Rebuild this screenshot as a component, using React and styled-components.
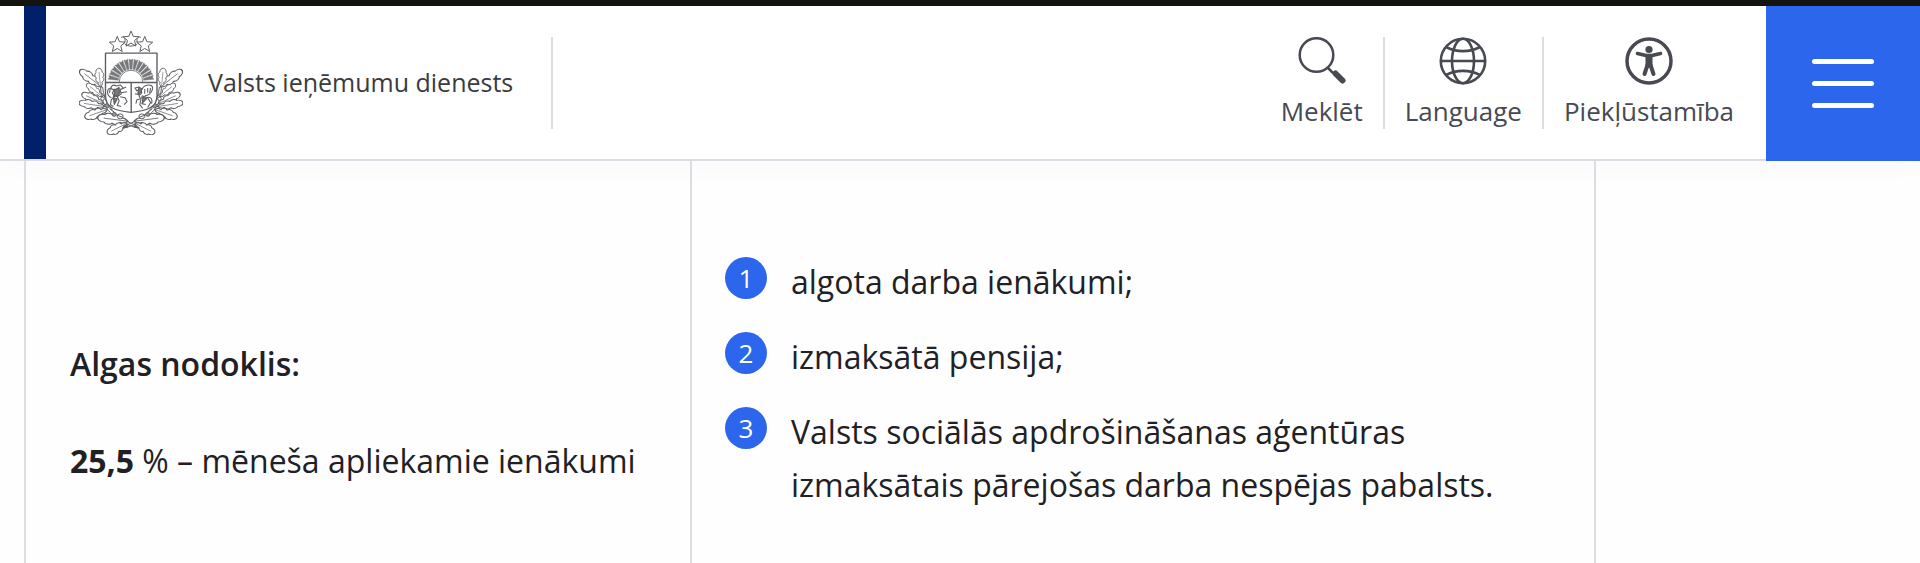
import React from "react"
import styled, { createGlobalStyle } from "styled-components"

const colors = {
  ink: "#1f2125",
  label: "#484a51",
  line: "#dcdde3",
  blue: "#2b66ec",
  navy: "#00206a",
}

const GlobalStyle = createGlobalStyle`
  * {
    box-sizing: border-box;
  }
  body {
    margin: 0;
    background: #fefefe;
    color: ${colors.ink};
    font-family: "Open Sans", "Noto Sans", sans-serif;
  }
`

const Header = styled.header`
  display: flex;
  align-items: stretch;
  height: 161px;
  border-top: 6px solid #14140f;
  background: #fff;
  box-shadow: 0 8px 24px rgba(20, 20, 40, 0.02);
`

const HeaderMain = styled.div`
  display: flex;
  flex: 1;
  align-items: center;
  justify-content: space-between;
  padding: 0 12px 0 24px;
  border-bottom: 2px solid ${colors.line};
`

const Brand = styled.a`
  display: flex;
  align-self: stretch;
  align-items: center;
  padding-left: 33px;
  border-left: 22px solid ${colors.navy};
  color: #3a3b3e;
  font-size: 25px;
  line-height: 32px;
  text-decoration: none;
`

const BrandName = styled.span`
  margin: 0 38px 0 25px;
  padding-bottom: 2px;
`

const Divider = styled.span`
  width: 2px;
  height: 92px;
  background: ${colors.line};
`

const Tools = styled.nav`
  display: flex;
  align-items: center;
`

const ToolButton = styled.button`
  display: flex;
  flex-direction: column;
  align-items: center;
  gap: 10px;
  padding: 0 20px 2px;
  border: 0;
  background: none;
  color: ${colors.label};
  font: inherit;
  font-size: 26px;
  line-height: 32px;
  cursor: pointer;
`

const MenuButton = styled.button`
  display: flex;
  flex-direction: column;
  align-items: center;
  justify-content: center;
  gap: 17px;
  width: 154px;
  padding: 0;
  border: 0;
  background: ${colors.blue};
  cursor: pointer;
`

const MenuLine = styled.span`
  width: 62px;
  height: 5px;
  border-radius: 3px;
  background: #fff;
`

const TaxTable = styled.table`
  width: calc(100% - 48px);
  max-width: 1572px;
  margin-left: 24px;
  border-spacing: 0;
  font-size: 32px;
  line-height: 53px;
`

const Cell = styled.td`
  padding: ${props => (props.$list ? "94px 33px 52px" : "176px 32px 52px 44px")};
  width: ${props => (props.$list ? "auto" : "668px")};
  border-left: ${props => (props.$list ? "0" : `2px solid ${colors.line}`)};
  border-right: 2px solid ${colors.line};
  vertical-align: top;
`

const Paragraph = styled.p`
  margin: 0 0 44px;

  &:last-child {
    margin-bottom: 0;
  }
`

const Strong = styled.strong`
  font-weight: ${props => (props.$heavy ? 700 : 600)};
`

const IncomeList = styled.ol`
  display: flex;
  flex-direction: column;
  gap: 22px;
  margin: 0;
  padding: 0;
  list-style: none;
  counter-reset: income;
`

const IncomeItem = styled.li`
  display: flex;
  align-items: flex-start;
  gap: 24px;
  counter-increment: income;

  &::before {
    content: counter(income);
    flex: none;
    width: 42px;
    height: 42px;
    margin-top: 2px;
    border-radius: 50%;
    background: ${colors.blue};
    color: #fff;
    font-size: 26px;
    line-height: 42px;
    text-align: center;
  }
`

const starPath = (cx, cy, r) => {
  const points = []
  for (let i = 0; i < 10; i++) {
    const radius = i % 2 ? r * 0.45 : r
    const angle = (Math.PI / 5) * i - Math.PI / 2
    points.push(
      `${(cx + radius * Math.cos(angle)).toFixed(1)} ${(cy + radius * Math.sin(angle)).toFixed(1)}`
    )
  }
  return `M${points.join("L")}Z`
}

// each leaf goes from its base to its tip: [x1, y1, x2, y2, width]
const leaves = [
  [23, 57, 1, 40, 10],
  [22, 57, 20, 38, 9],
  [24, 67, 8, 54, 8],
  [25, 74, 3, 64, 9],
  [26, 77, 0, 73, 9],
  [29, 80, 6, 88, 10],
  [50, 92, 19, 88, 11],
  [49, 94, 29, 104, 10],
]

const Leaf = ({ leaf }) => {
  const [x1, y1, x2, y2, width] = leaf
  const length = Math.hypot(x2 - x1, y2 - y1)
  const angle = (Math.atan2(y2 - y1, x2 - x1) * 180) / Math.PI
  return (
    <g
      transform={`translate(${x1} ${y1}) rotate(${angle}) scale(${length / 20} ${width / 10})`}
    >
      <path
        fill="#fff"
        d="M0 0C2-2 3-3 5-2C6-5 9-5 10-3.6C12-6 15-5 15.500-3.500C18-4 20-2 20 0C20 2 18 4 15.500 3.500C15 5 12 6 10 3.600C9 5 6 5 5 2C3 3 2 2 0 0Z"
      />
      <path d="M0 0H16" strokeWidth="0.6" />
    </g>
  )
}

const Branch = () => (
  <>
    <path d="M62 99C48 97 34 88 27 77C23 70 22 62 22 55" />
    <path d="M61 97C49 93 39 88 31 77C27 71 25 65 24 57" />
    {leaves.map(leaf => (
      <Leaf leaf={leaf} key={leaf.join()} />
    ))}
    <ellipse cx="42" cy="87" rx="3" ry="2.500" fill="#fff" />
    <circle cx="36" cy="85" r="2" fill="#999" />
    <circle cx="29" cy="76" r="2.200" fill="#999" />
    <circle cx="24" cy="69" r="1.800" fill="#fff" />
    <path d="M39 86l6 2M31 79l5 4M23 63l3 4" />
    <path d="M56 97L61 98.500" strokeWidth="2.500" />
  </>
)

const rays = [-78, -65, -52, -39, -26, -13, 0, 13, 26, 39, 52, 65, 78]

const CoatOfArms = () => (
  <svg
    width="104"
    height="104"
    viewBox="0 0 106 106"
    fill="none"
    stroke="#5c5d61"
    strokeWidth="1"
    strokeLinejoin="round"
    aria-hidden="true"
  >
    <Branch />
    <g transform="matrix(-1 0 0 1 106 0)">
      <Branch />
    </g>
    <path d="M43 6.500C47 4 49 12 44 14M63 6.500C59 4 57 12 62 14M47 13.500C51 16 55 16 59 13.500" />
    <path fill="#fff" d={starPath(39, 14, 8.5)} />
    <path fill="#fff" d={starPath(67, 14, 8.5)} />
    <path fill="#fff" d={starPath(53, 8.5, 8.5)} />
    <path
      d="M27 22.500H79.500V66C79.500 78 70 81 53 83C36 81 27 78 27 66Z"
      fill="#fff"
      strokeWidth="1.400"
    />
    <path d="M27 52.500H79.500M53.200 52.500V83" strokeWidth="1.400" />
    <path d="M41 52A12 12 0 0 1 65 52" strokeWidth="0.800" />
    {rays.map(angle => (
      <path
        key={angle}
        transform={`translate(53 52) rotate(${angle})`}
        d="M-1-13L-2-23.500L0-22.500L2-23.500L1-13Z"
        fill="#77787c"
        stroke="#77787c"
        strokeWidth="0.400"
      />
    ))}
    {/* lion */}
    <g strokeWidth="1.100">
      <path
        d="M38 56c-3-2-6 0-5 3l3 1-2 3 2 4-3 3-1 5 3 2M38 56l4-1 3 3-3 2 1 4-4 3 2 4-2 5 4 1M42 60l6-3M43 63l6-1M42 67l5 1 2 4-3 3"
      />
      <path d="M36 59l4 2-2 3-3 3 5-1M33 68c-5-2-5-9-1-10l-1 5M40 57l2 2" />
      <path d="M36 60l4-2 2 4-3 5-3-2zM35 68l4 1-3 6z" fill="#77787b" />
    </g>
    {/* griffin */}
    <g strokeWidth="1.100">
      <path
        d="M61 57l-4 1 2 3 4-2 1 4-3 3 2 3-4 1-1 4M64 60c2-6 12-7 11-1-1 5-5 7-8 7M64 66l6 2 3 5-3 5M63 70l-1 5 3 4M69 68c5-2 6 3 5 6M57 64l5 1"
      />
      <path d="M67 59v5M70 58v5M73 58l-1 5M66 69l-2 5 4 1" />
      <path d="M61 57l3 2-1 4-3 1zM64 67l5 2-4 4z" fill="#77787b" />
    </g>
  </svg>
)

const SearchIcon = () => (
  <svg width="48" height="48" viewBox="0 0 48 48" fill="none" stroke="currentColor">
    <circle cx="18.500" cy="18" r="16.800" strokeWidth="2.500" />
    <path d="M30 31l5 5" strokeWidth="2.500" />
    <path d="M37.500 36.500L44.500 43.500" strokeWidth="6" strokeLinecap="round" />
  </svg>
)

const GlobeIcon = () => (
  <svg
    width="48"
    height="48"
    viewBox="0 0 48 48"
    fill="none"
    stroke="currentColor"
    strokeWidth="2.600"
  >
    <circle cx="24" cy="24" r="22.200" />
    <ellipse cx="24" cy="24" rx="11" ry="22.200" />
    <path d="M2 24H46M7 10C17 15.500 31 15.500 41 10M7 38C17 32.500 31 32.500 41 38" />
  </svg>
)

const AccessibilityIcon = () => (
  <svg width="48" height="48" viewBox="0 0 48 48" fill="none" stroke="currentColor">
    <circle cx="24" cy="24" r="22" strokeWidth="3.500" />
    <circle cx="24" cy="12.500" r="3.600" fill="currentColor" stroke="none" />
    <path
      d="M12.500 16.500L21 18.500H27L35.500 16.500"
      strokeWidth="3.600"
      strokeLinecap="round"
      strokeLinejoin="round"
    />
    <path d="M20.500 18H27.500V29L24 31L20.500 29Z" fill="currentColor" stroke="none" />
    <path
      d="M22.500 28L19.500 37M25.500 28L28.500 37"
      strokeWidth="4"
      strokeLinecap="round"
    />
  </svg>
)

const incomes = [
  "algota darba ienākumi;",
  "izmaksātā pensija;",
  "Valsts sociālās apdrošināšanas aģentūras izmaksātais pārejošas darba nespējas pabalsts.",
]

const App = () => {
  return (
    <>
      <GlobalStyle />
      <Header>
        <HeaderMain>
          <Brand href="#">
            <CoatOfArms />
            <BrandName>Valsts ieņēmumu dienests</BrandName>
            <Divider />
          </Brand>
          <Tools>
            <ToolButton type="button">
              <SearchIcon />
              Meklēt
            </ToolButton>
            <Divider />
            <ToolButton type="button">
              <GlobeIcon />
              Language
            </ToolButton>
            <Divider />
            <ToolButton type="button">
              <AccessibilityIcon />
              Piekļūstamība
            </ToolButton>
          </Tools>
        </HeaderMain>
        <MenuButton type="button" aria-label="Izvēlne">
          <MenuLine />
          <MenuLine />
          <MenuLine />
        </MenuButton>
      </Header>
      <main>
        <TaxTable>
          <tbody>
            <tr>
              <Cell>
                <Paragraph>
                  <Strong>Algas nodoklis:</Strong>
                </Paragraph>
                <Paragraph>
                  <Strong $heavy>25,5</Strong> % – mēneša apliekamie ienākumi
                </Paragraph>
              </Cell>
              <Cell $list>
                <IncomeList>
                  {incomes.map(income => (
                    <IncomeItem key={income}>{income}</IncomeItem>
                  ))}
                </IncomeList>
              </Cell>
            </tr>
          </tbody>
        </TaxTable>
      </main>
    </>
  )
}

export default App
